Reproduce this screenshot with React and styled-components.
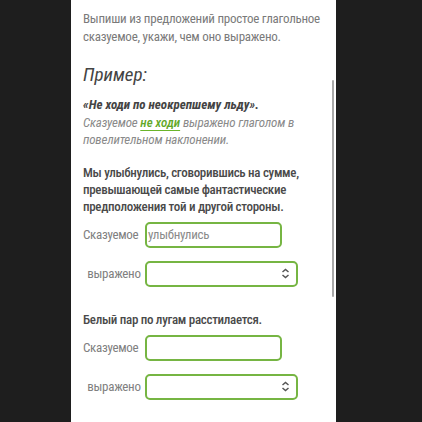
import React from 'react';
import styled, { createGlobalStyle } from 'styled-components';

const GlobalStyle = createGlobalStyle`
  html, body {
    margin: 0;
    padding: 0;
    background: #1e1e1e;
  }
  body {
    font-family: Roboto, "Liberation Sans", sans-serif;
  }
`;

const Page = styled.div`
  display: flex;
  height: 422px;
  overflow: hidden;
`;

const Panel = styled.div`
  position: relative;
  width: 265px;
  margin-left: 71px;
  height: 422px;
  background: #fff;
  padding: 10px 0 0 12px;
  box-sizing: border-box;
  overflow: hidden;
  font-stretch: 82%;
`;

const Scrollbar = styled.div`
  position: absolute;
  right: 2px;
  top: 80px;
  width: 2px;
  height: 217px;
  background: #a8a8a8;
  border-radius: 1px;
`;

const Intro = styled.p`
  margin: 0;
  font-size: 13px;
  line-height: 18px;
  color: #7a7a7a;
  letter-spacing: -0.25px;
`;

const Heading = styled.h2`
  margin: 17px 0 0;
  font-size: 19px;
  line-height: 24px;
  font-style: italic;
  font-weight: 400;
  color: #444;
`;

const Example = styled.div`
  margin-top: 9px;
  font-size: 13px;
  line-height: 17.5px;
  font-style: italic;
  color: #8a8a8a;
  font-stretch: 84%;
`;

const Quote = styled.div`
  font-weight: 700;
  color: #444;
`;

const Plain = styled.span`
  letter-spacing: -0.2px;
`;

const Mark = styled.span`
  color: #62a828;
  font-weight: 500;
  text-decoration: underline;
  text-decoration-color: #6ab42a;
  text-underline-offset: 3px;
`;

const Question = styled.p`
  margin: ${({ $top }) => $top}px 0 0;
  font-size: 13px;
  line-height: 17px;
  font-weight: 500;
  color: #4a4a4a;
  letter-spacing: -0.3px;
`;

const Row = styled.div`
  display: grid;
  grid-template-columns: 62px auto;
  align-items: center;
  margin-top: ${({ $top }) => $top}px;
`;

const Label = styled.span`
  font-size: 13px;
  color: #808080;
  letter-spacing: -0.3px;
  text-align: ${({ $center }) => ($center ? 'center' : 'left')};
`;

const Field = styled.div`
  display: flex;
  align-items: center;
  justify-content: space-between;
  width: ${({ $w }) => $w}px;
  height: 26px;
  box-sizing: border-box;
  border: 2px solid #76b543;
  border-radius: 5px;
  padding: 0 6px 0 1px;
  font-size: 13px;
  color: #8a8a8a;
  letter-spacing: -0.3px;
`;

const Arrows = () => (
  <svg width="9" height="11" viewBox="0 0 9 11">
    <path d="M1.5 4 L4.5 1.5 L7.5 4 M1.5 7 L4.5 9.5 L7.5 7" fill="none" stroke="#555" strokeWidth="1.5" />
  </svg>
);

const Task = ({ text, value, top }) => (
  <>
    <Question $top={top}>{text}</Question>
    <Row $top={7}>
      <Label>Сказуемое</Label>
      <Field $w={137}>{value}</Field>
    </Row>
    <Row $top={13}>
      <Label $center>выражено</Label>
      <Field $w={153}>
        <span />
        <Arrows />
      </Field>
    </Row>
  </>
);

export default function App() {
  return (
    <Page>
      <GlobalStyle />
      <Panel>
        <Intro>
          Выпиши из предложений простое глагольное сказуемое, укажи, чем оно выражено.
        </Intro>
        <Heading>Пример:</Heading>
        <Example>
          <Quote>«Не ходи по неокрепшему льду».</Quote>
          <Plain>Сказуемое </Plain>
          <Mark>не ходи</Mark>
          <Plain> выражено глаголом в повелительном наклонении.</Plain>
        </Example>
        <Task
          top={15}
          text="Мы улыбнулись, сговорившись на сумме, превышающей самые фантастические предположения той и другой стороны."
          value="улыбнулись"
        />
        <Task top={24} text="Белый пар по лугам расстилается." value="" />
        <Scrollbar />
      </Panel>
    </Page>
  );
}
